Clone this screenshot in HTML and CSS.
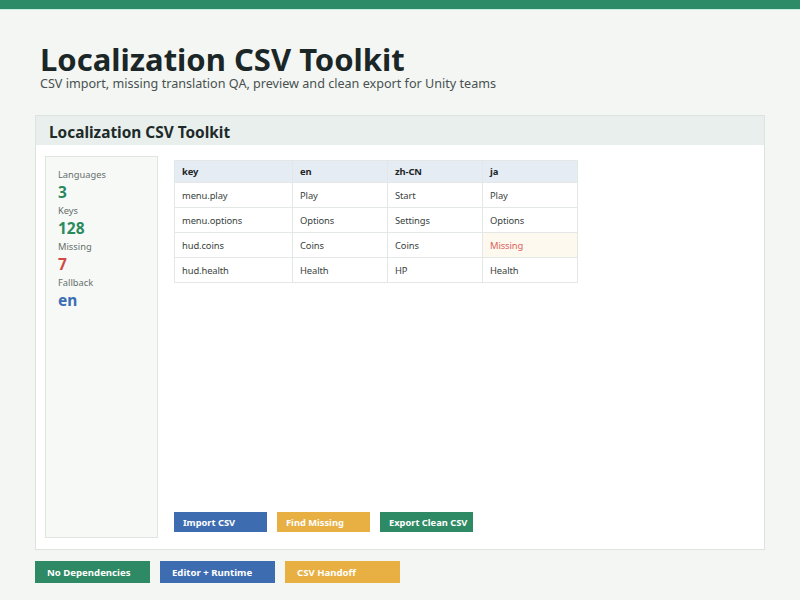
FILE: index.html
```html
<!DOCTYPE html>
<html lang="en">
<head>
    <meta charset="UTF-8">
    <meta name="viewport" content="width=device-width, initial-scale=1.0">
    <title>Localization CSV Toolkit</title>
    <link rel="stylesheet" href="styles.css">
</head>
<body>
    <div class="top-bar"></div>

    <header class="page-header">
        <h1>Localization CSV Toolkit</h1>
        <p class="subtitle">CSV import, missing translation QA, preview and clean export for Unity teams</p>
    </header>

    <section class="panel">
        <div class="panel-title">Localization CSV Toolkit</div>
        <div class="panel-body">
            <aside class="stats">
                <div class="stat-label">Languages</div>
                <div class="stat-value green">3</div>
                <div class="stat-label">Keys</div>
                <div class="stat-value green">128</div>
                <div class="stat-label">Missing</div>
                <div class="stat-value red">7</div>
                <div class="stat-label">Fallback</div>
                <div class="stat-value blue">en</div>
            </aside>

            <div class="main">
                <table class="csv-table">
                    <colgroup>
                        <col class="col-key">
                        <col class="col-lang">
                        <col class="col-lang">
                        <col class="col-lang">
                    </colgroup>
                    <thead>
                        <tr><th>key</th><th>en</th><th>zh-CN</th><th>ja</th></tr>
                    </thead>
                    <tbody>
                        <tr><td>menu.play</td><td>Play</td><td>Start</td><td>Play</td></tr>
                        <tr><td>menu.options</td><td>Options</td><td>Settings</td><td>Options</td></tr>
                        <tr><td>hud.coins</td><td>Coins</td><td>Coins</td><td class="missing">Missing</td></tr>
                        <tr><td>hud.health</td><td>Health</td><td>HP</td><td>Health</td></tr>
                    </tbody>
                </table>

                <div class="actions">
                    <button class="btn blue-bg">Import CSV</button>
                    <button class="btn yellow-bg">Find Missing</button>
                    <button class="btn green-bg">Export Clean CSV</button>
                </div>
            </div>
        </div>
    </section>

    <div class="badges">
        <span class="badge green-bg">No Dependencies</span>
        <span class="badge blue-bg">Editor + Runtime</span>
        <span class="badge yellow-bg">CSV Handoff</span>
    </div>
</body>
</html>
```

FILE: styles.css
```css
body {
    margin: 0;
    background-color: #f4f6f4;
    color: #1d2a2a;
    font-family: "Noto Sans", "Open Sans", sans-serif;
}

.top-bar {
    height: 9px;
    background-color: #2e8b68;
    border-bottom: 1px solid #c9eee0;
}

.page-header {
    padding: 29px 0 0 40px;
}

.page-header h1 {
    margin: 0;
    font-size: 31px;
    font-weight: 700;
    line-height: 40px;
    color: #1b2727;
}

.subtitle {
    margin: -4px 0 0;
    font-size: 12.6px;
    line-height: 18px;
    color: #47514f;
}

.panel {
    margin: 22px 35px 0;
    height: 433px;
    background-color: #fff;
    border: 1px solid #dde3df;
    display: flex;
    flex-direction: column;
}

.panel-title {
    height: 29px;
    line-height: 33px;
    padding-left: 13px;
    background-color: #e9efec;
    font-size: 15.4px;
    font-weight: 700;
}

.panel-body {
    flex: 1;
    display: flex;
    padding: 11px 10px 11px 9px;
    gap: 16px;
}

.stats {
    width: 99px;
    padding: 10px 0 0 12px;
    background-color: #f7f9f7;
    border: 1px solid #e0e5e2;
}

.stat-label {
    font-size: 9.3px;
    line-height: 15px;
    color: #666f6c;
}

.stat-value {
    font-size: 15.5px;
    font-weight: 700;
    line-height: 21px;
}

.green { color: #2a8a5e; }
.red { color: #d24a45; }
.blue { color: #3c6eb4; }

.main {
    flex: 1;
    display: flex;
    flex-direction: column;
    justify-content: space-between;
    padding: 4px 0 6px;
}

.csv-table {
    width: 404px;
    table-layout: fixed;
    border-collapse: collapse;
    font-size: 9.4px;
    letter-spacing: -0.1px;
    color: #3a4240;
}

.col-key { width: 118px; }
.col-lang { width: 95px; }

.csv-table th,
.csv-table td {
    border: 1px solid #e3e7e5;
    padding: 0 7px;
    text-align: left;
}

.csv-table th {
    height: 21px;
    background-color: #e5ecf4;
    font-weight: 700;
    color: #1d2526;
}

.csv-table td {
    height: 24px;
}

.csv-table td.missing {
    background-color: #fdf9ee;
    color: #d9645e;
}

.actions {
    display: flex;
    gap: 10px;
}

.btn {
    width: 93px;
    height: 20px;
    padding: 0 0 0 9px;
    border: none;
    text-align: left;
    white-space: nowrap;
    font-family: inherit;
    font-size: 9.3px;
    font-weight: 700;
    color: #fff;
    cursor: pointer;
}

.blue-bg { background-color: #3d6db0; }
.yellow-bg { background-color: #e8b043; }
.green-bg { background-color: #2d8a64; }

.badges {
    display: flex;
    gap: 10px;
    padding: 11px 35px 0;
}

.badge {
    width: 103px;
    height: 22px;
    line-height: 23px;
    padding-left: 12px;
    font-size: 9.6px;
    font-weight: 700;
    color: #fff;
}
```
